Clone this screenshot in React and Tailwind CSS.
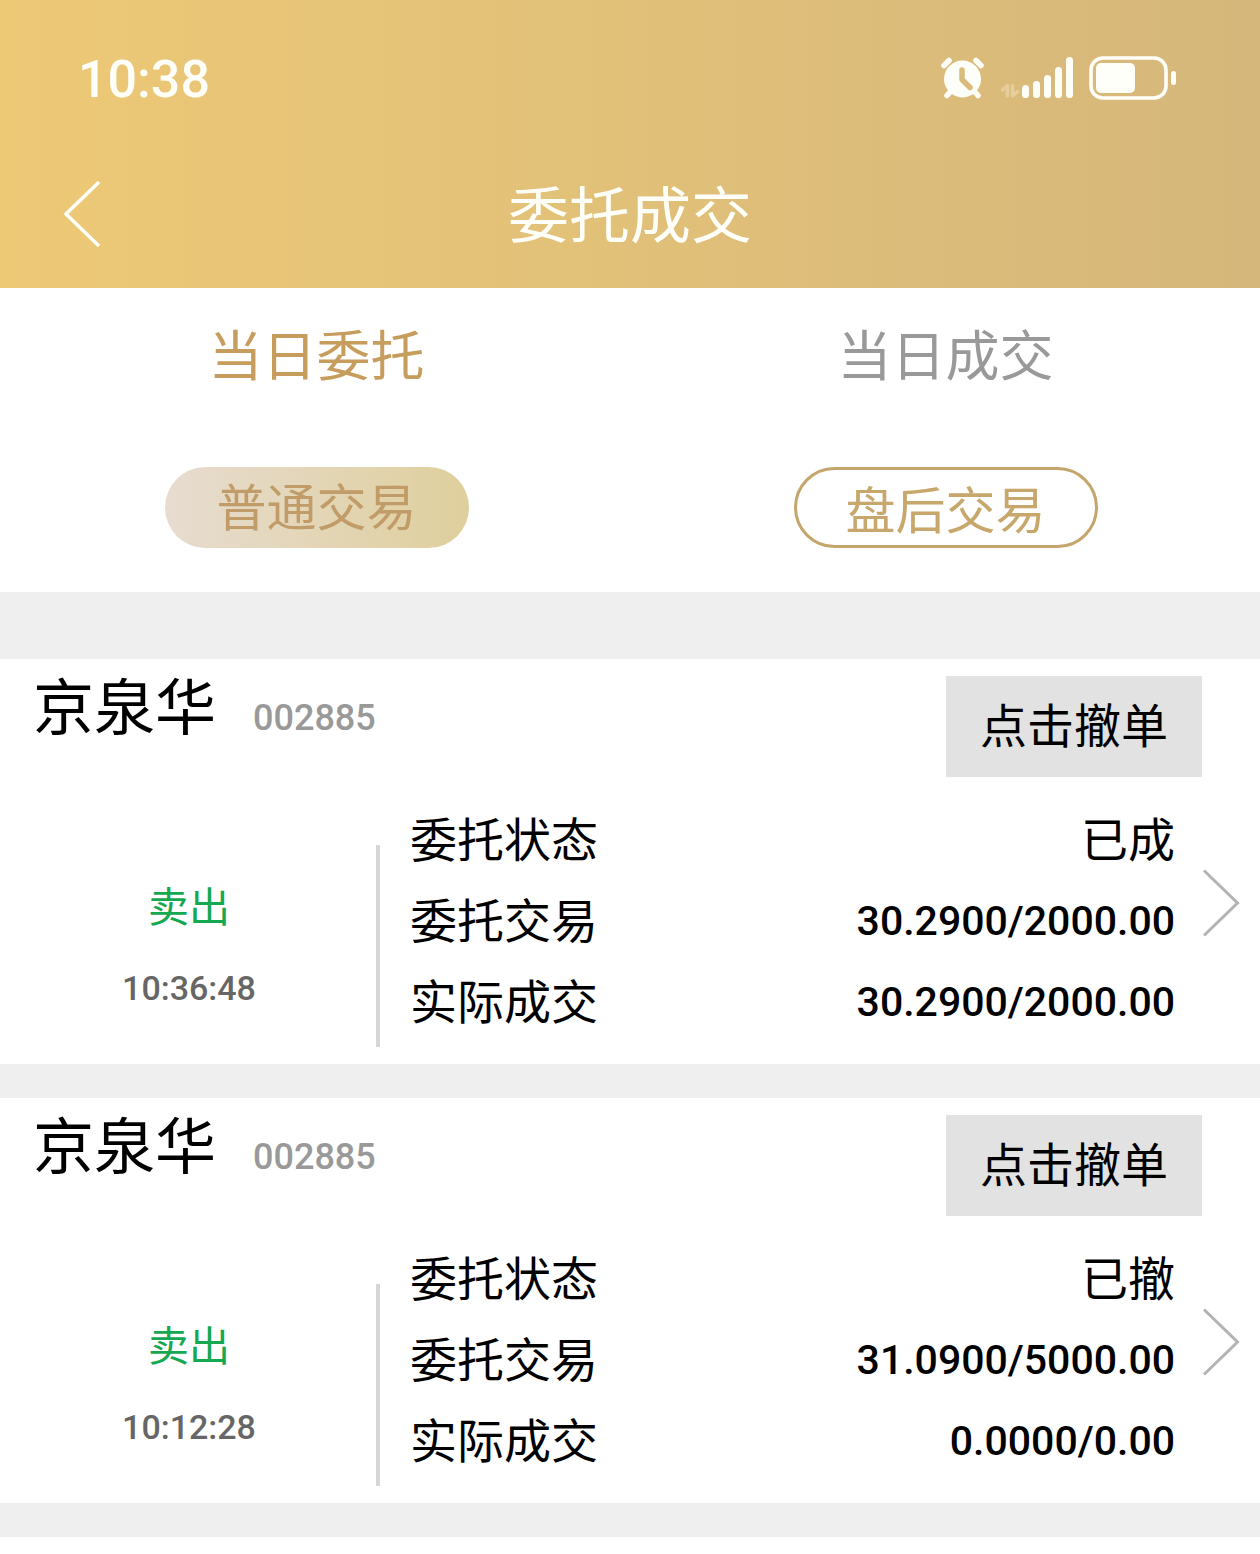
const orders = [
  {
    id: 1,
    name: '京泉华',
    code: '002885',
    side: '卖出',
    time: '10:36:48',
    status: '已成',
    ordered: '30.2900/2000.00',
    filled: '30.2900/2000.00',
  },
  {
    id: 2,
    name: '京泉华',
    code: '002885',
    side: '卖出',
    time: '10:12:28',
    status: '已撤',
    ordered: '31.0900/5000.00',
    filled: '0.0000/0.00',
  },
];

function AlarmIcon() {
  return (
    <svg width="44" height="42" viewBox="0 0 44 42" fill="none" aria-hidden="true">
      <circle cx="21.500" cy="22" r="18.500" fill="#fffffa" />
      <path d="M3 8.500L8 3.500M40 8.500L35 3.500" stroke="#fffffa" strokeWidth="5.500" strokeLinecap="round" />
      <path d="M10 34L6 38.500M33 34L37 38.500" stroke="#fffffa" strokeWidth="5.500" strokeLinecap="round" />
      <path d="M21 13V22.500L29 30.500" stroke="#dbbb7b" strokeWidth="5.500" strokeLinecap="round" strokeLinejoin="round" />
    </svg>
  );
}

function SignalIcon() {
  return (
    <svg width="74" height="42" viewBox="0 0 74 42" fill="none" aria-hidden="true">
      <path d="M1.500 33L6.500 28.500V39M11.500 28.500V39L16.500 34.500" stroke="#e6cd9a" strokeWidth="3.500" strokeLinecap="round" strokeLinejoin="round" />
      <g fill="#fffffa">
        <rect x="21" y="28" width="7" height="13" rx="3.500" />
        <rect x="32" y="24" width="7" height="17" rx="3.500" />
        <rect x="43" y="18" width="7" height="23" rx="3.500" />
        <rect x="54" y="10" width="7" height="31" rx="3.500" />
        <rect x="65" y="0" width="7" height="41" rx="3.500" />
      </g>
    </svg>
  );
}

function BatteryIcon() {
  return (
    <svg width="88" height="44" viewBox="0 0 88 44" fill="none" aria-hidden="true">
      <rect x="2" y="2" width="75" height="40" rx="12" stroke="#fffffa" strokeWidth="3.600" />
      <rect x="7" y="7" width="39" height="30" rx="5" fill="#fffffa" />
      <rect x="82" y="15" width="5" height="14" rx="2.500" fill="#fffffa" />
    </svg>
  );
}

function StatusBar() {
  return (
    <div className="flex h-[156px] items-center justify-between pl-[78px] pr-[83px]">
      <span className="pt-1 font-[Roboto] text-[52px] leading-[60px] font-medium">10:38</span>
      <div className="flex items-center">
        <AlarmIcon />
        <div className="mr-[14px] ml-4">
          <SignalIcon />
        </div>
        <BatteryIcon />
      </div>
    </div>
  );
}

function OrderCard({ order }) {
  return (
    <article className="bg-white">
      <div className="flex items-start justify-between pt-[15px] pr-[58px] pl-[33px]">
        <h2 className="flex items-baseline gap-[37px]">
          <span className="text-[61px] leading-[60px]">{order.name}</span>
          <span className="font-[Roboto] text-[36px] leading-[60px] font-medium text-[#999999]">{order.code}</span>
        </h2>
        <button type="button" className="mt-0.5 h-[101px] w-[256px] bg-[#e2e2e2] pb-2 text-[47px] leading-[60px]">
          点击撤单
        </button>
      </div>

      <div className="flex pt-[22px]">
        <div className="w-[376px] shrink-0 pt-[66px] pl-0.5 text-center">
          <p className="text-[41px] leading-[78px] text-[#14a850]">{order.side}</p>
          <p className="font-[Roboto] text-[34px] leading-[90px] font-medium text-[#666666]">{order.time}</p>
        </div>
        <div className="mt-[46px] mb-[17px] w-1 shrink-0 bg-[#d6d6d6]" />
        <dl className="grow pb-[22px] pl-[30px]">
          <div className="flex h-[81px] items-center justify-between">
            <dt className="pb-1 text-[47px]">委托状态</dt>
            <dd className="pb-1 text-[47px]">{order.status}</dd>
          </div>
          <div className="flex h-[81px] items-center justify-between">
            <dt className="pb-1 text-[47px]">委托交易</dt>
            <dd className="pt-0.5 font-[Roboto] text-[41px] font-medium">{order.ordered}</dd>
          </div>
          <div className="flex h-[81px] items-center justify-between">
            <dt className="pb-1 text-[47px]">实际成交</dt>
            <dd className="pt-0.5 font-[Roboto] text-[41px] font-medium">{order.filled}</dd>
          </div>
        </dl>
        <a href="#detail" aria-label="查看详情" className="mt-[70px] mr-[20px] ml-[27px] shrink-0 self-start">
          <svg width="38" height="68" viewBox="0 0 38 68" fill="none" aria-hidden="true">
            <path d="M2 1.500L35.500 34L2 66.500" stroke="#b3b3b3" strokeWidth="3" />
          </svg>
        </a>
      </div>
    </article>
  );
}

export default function App() {
  return (
    <div className="min-h-screen bg-white font-['Noto_Sans_CJK_SC',sans-serif] text-black">
      <header className="bg-linear-to-r from-[#edc976] to-[#d5b77b] text-[#fffffa]">
        <StatusBar />
        <div className="grid h-[132px] grid-cols-[1fr_auto_1fr] items-start">
          <a href="#back" aria-label="返回" className="mt-6 ml-[63px] justify-self-start">
            <svg width="38" height="68" viewBox="0 0 38 68" fill="none" aria-hidden="true">
              <path d="M36 2L3 34L36 66" stroke="#fffffa" strokeWidth="3.500" />
            </svg>
          </a>
          <h1 className="pt-[22px] text-[61px] leading-[68px]">委托成交</h1>
        </div>
      </header>

      <div className="grid grid-cols-2 pl-0.5">
        <button type="button" className="h-[132px] pb-1 text-[54px] text-[#c79d5e]">
          当日委托
        </button>
        <button type="button" className="h-[132px] pb-1 text-[54px] text-[#999999]">
          当日成交
        </button>
      </div>
      <div className="grid grid-cols-2 justify-items-center pt-[47px] pb-11 pl-0.5">
        <button
          type="button"
          className="h-[81px] w-[304px] rounded-full bg-linear-to-r from-[#e7dcd0] to-[#dfcf9c] pb-1.5 text-[50px] leading-[75px] text-[#c19c68]"
        >
          普通交易
        </button>
        <button
          type="button"
          className="h-[81px] w-[304px] rounded-full border-3 border-[#c4a66c] text-[50px] leading-[75px] text-[#c7a76c]"
        >
          盘后交易
        </button>
      </div>

      <main className="flex flex-col gap-[34px] bg-[#efefef] pt-[67px] pb-[34px]">
        {orders.map((order) => (
          <OrderCard key={order.id} order={order} />
        ))}
      </main>
    </div>
  );
}
